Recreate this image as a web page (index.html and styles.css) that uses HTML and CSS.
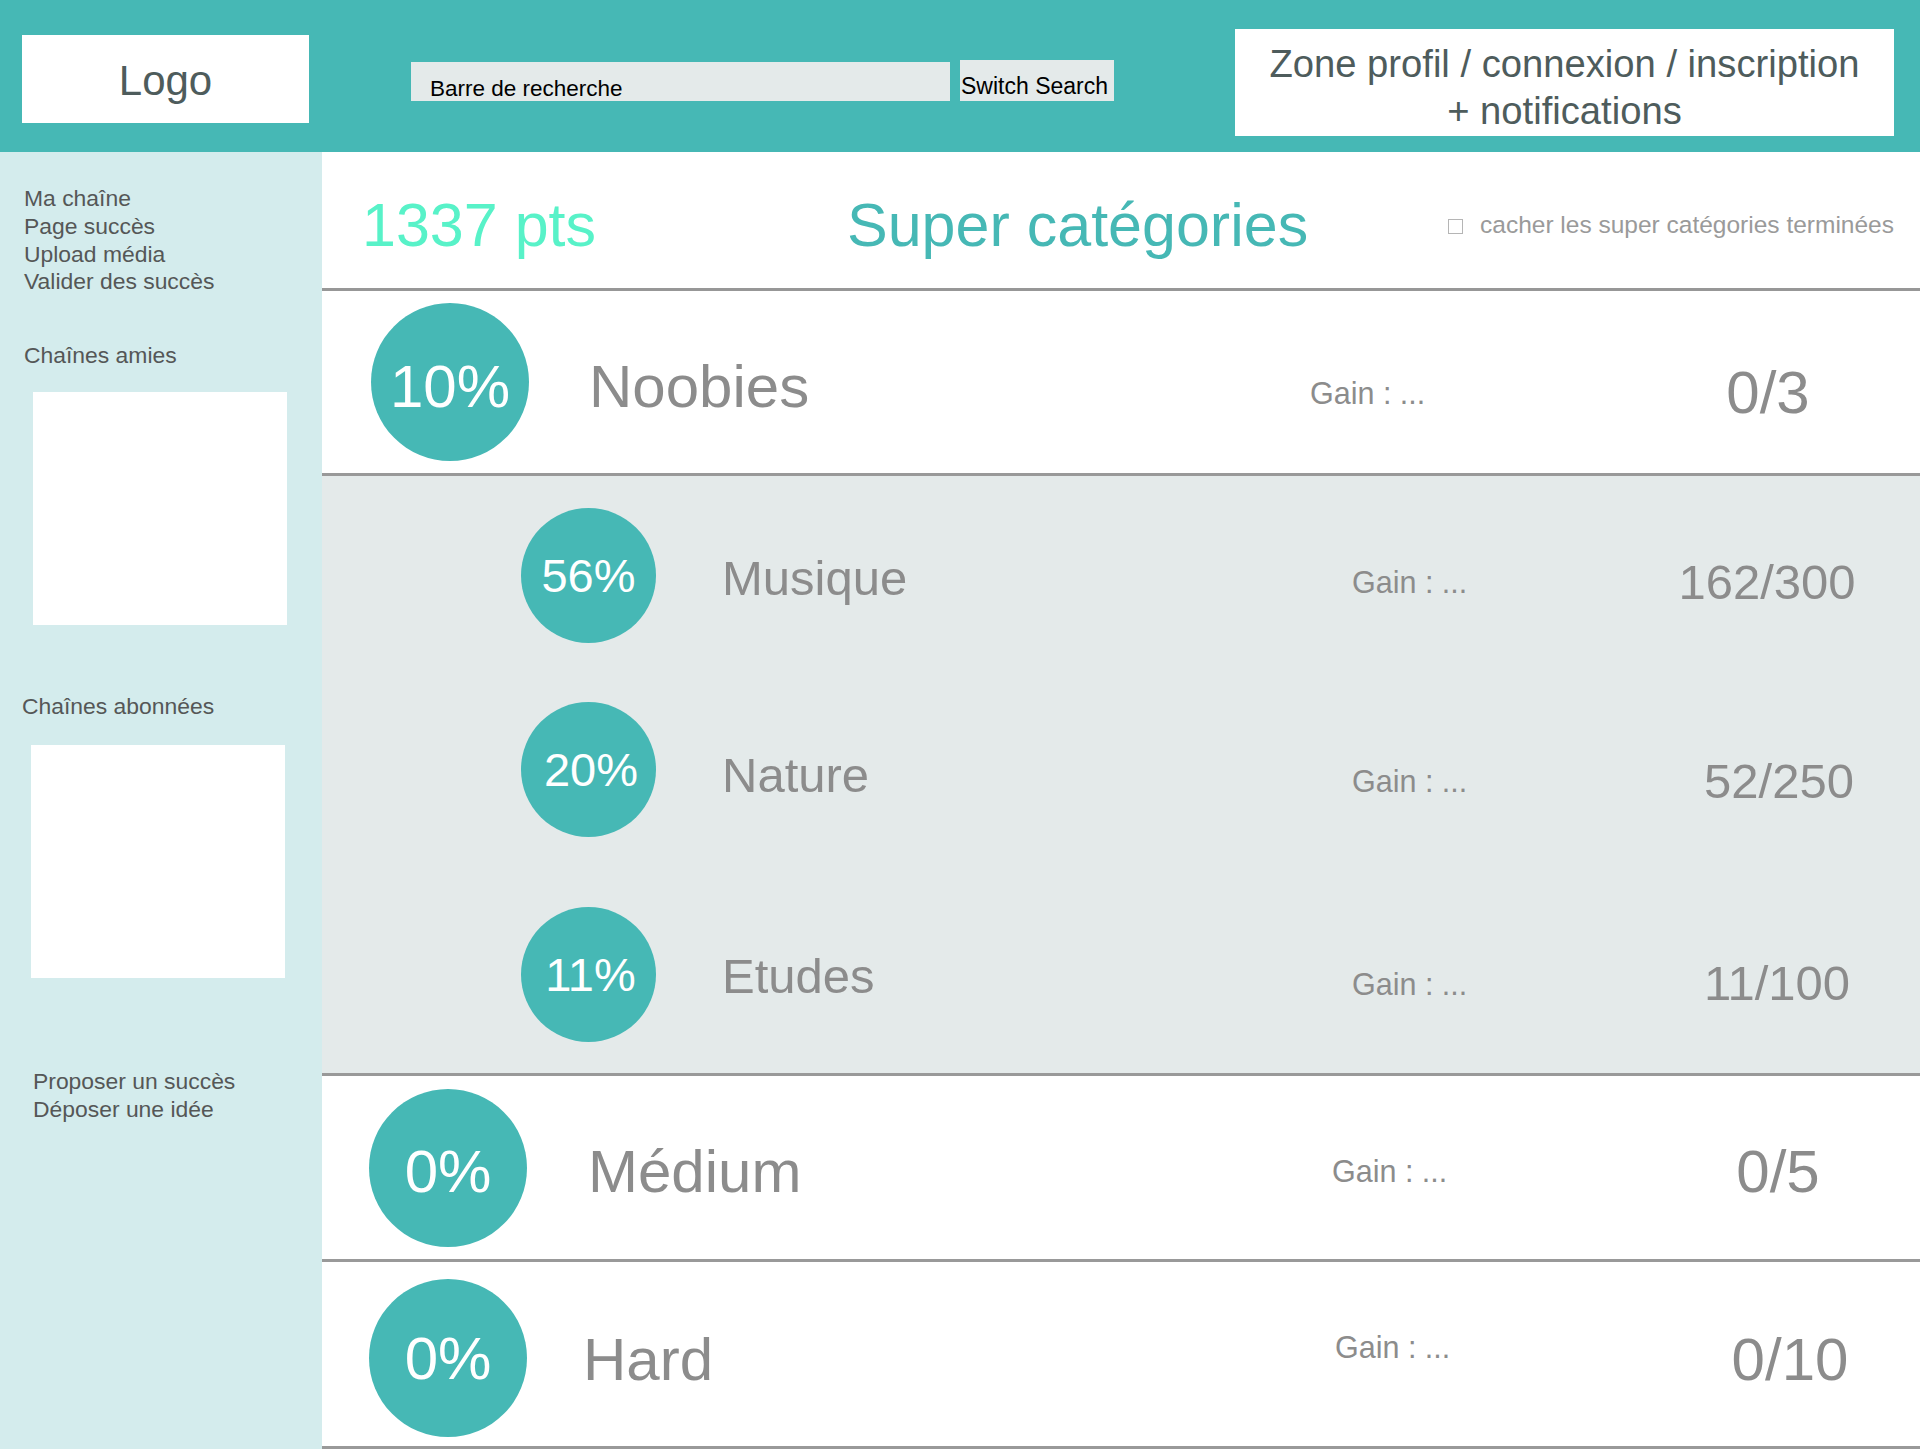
FILE: index.html
```html
<!DOCTYPE html>
<html lang="fr">
<head>
<meta charset="utf-8">
<title>Super catégories</title>
<link rel="stylesheet" href="styles.css">
</head>
<body>
<div class="page">
  <header class="topbar">
    <div class="logo">Logo</div>
    <div class="search">Barre de recherche</div>
    <div class="switch">Switch Search</div>
    <div class="profile">Zone profil / connexion / inscription<br>+ notifications</div>
  </header>
  <div class="layout">
    <aside class="sidebar">
      <ul class="nav">
        <li>Ma chaîne</li>
        <li>Page succès</li>
        <li>Upload média</li>
        <li>Valider des succès</li>
      </ul>
      <div class="side-label side-label--friends">Chaînes amies</div>
      <div class="side-box side-box--friends"></div>
      <div class="side-label side-label--subs">Chaînes abonnées</div>
      <div class="side-box side-box--subs"></div>
      <ul class="nav nav--bottom">
        <li>Proposer un succès</li>
        <li>Déposer une idée</li>
      </ul>
    </aside>
    <main class="content">
      <div class="content-head">
        <div class="points">1337 pts</div>
        <h1 class="title">Super catégories</h1>
        <label class="hide-done"><span class="checkbox"></span>cacher les super catégories terminées</label>
      </div>
      <section class="row row--big row--noobies">
        <div class="circle">10%</div>
        <div class="name">Noobies</div>
        <div class="gain">Gain : ...</div>
        <div class="count">0/3</div>
      </section>
      <div class="subs">
        <div class="row row--sub row--musique">
          <div class="circle">56%</div>
          <div class="name">Musique</div>
          <div class="gain">Gain : ...</div>
          <div class="count">162/300</div>
        </div>
        <div class="row row--sub row--nature">
          <div class="circle">20%</div>
          <div class="name">Nature</div>
          <div class="gain">Gain : ...</div>
          <div class="count">52/250</div>
        </div>
        <div class="row row--sub row--etudes">
          <div class="circle">11%</div>
          <div class="name">Etudes</div>
          <div class="gain">Gain : ...</div>
          <div class="count">11/100</div>
        </div>
      </div>
      <section class="row row--big row--medium">
        <div class="circle">0%</div>
        <div class="name">Médium</div>
        <div class="gain">Gain : ...</div>
        <div class="count">0/5</div>
      </section>
      <section class="row row--big row--hard">
        <div class="circle">0%</div>
        <div class="name">Hard</div>
        <div class="gain">Gain : ...</div>
        <div class="count">0/10</div>
      </section>
    </main>
  </div>
</div>
</body>
</html>
```
FILE: styles.css
```css
* { box-sizing: border-box; }
html, body {
  margin: 0;
  padding: 0;
  width: 1920px;
  height: 1449px;
  overflow: hidden;
  background: #ffffff;
  font-family: "Liberation Sans", Arial, Helvetica, sans-serif;
}
.page { width: 1920px; height: 1449px; display: flex; flex-direction: column; }

/* ---------- top bar ---------- */
.topbar {
  flex: none;
  height: 152px;
  background: #46b8b5;
  display: flex;
  align-items: flex-start;
  padding-left: 22px;
}
.logo {
  width: 287px;
  height: 88px;
  margin-top: 35px;
  background: #fff;
  color: #4e5c5c;
  font-size: 42px;
  display: flex;
  align-items: center;
  justify-content: center;
  padding-top: 3px;
}
.search {
  width: 539px;
  height: 39px;
  margin-top: 62px;
  margin-left: 102px;
  background: #e4eaea;
  color: #000;
  font-size: 22.5px;
  line-height: 26px;
  padding: 14px 0 0 19px;
  white-space: nowrap;
}
.switch {
  width: 154px;
  height: 41px;
  margin-top: 60px;
  margin-left: 10px;
  background: #e4eaea;
  color: #000;
  font-size: 23px;
  line-height: 26px;
  padding: 13px 0 0 1px;
  white-space: nowrap;
}
.profile {
  width: 659px;
  height: 107px;
  margin-top: 29px;
  margin-left: 121px;
  background: #fff;
  color: #4e5c5c;
  font-size: 38.2px;
  line-height: 47px;
  text-align: center;
  padding-top: 11px;
  white-space: nowrap;
}

/* ---------- layout ---------- */
.layout { flex: 1; display: flex; }
.sidebar {
  flex: none;
  width: 322px;
  background: #d4eced;
  color: #555757;
  font-size: 22.9px;
  line-height: 27.8px;
  padding-top: 33px;
}
.nav { list-style: none; margin: 0; padding: 0 0 0 24px; }
.nav--bottom { margin-top: 90px; padding-left: 33px; }
.side-label { white-space: nowrap; }
.side-label--friends { margin-top: 46px; padding-left: 24px; }
.side-label--subs { margin-top: 68px; padding-left: 22px; }
.side-box { width: 254px; height: 233px; background: #fff; }
.side-box--friends { margin-top: 22px; margin-left: 33px; }
.side-box--subs { margin-top: 24px; margin-left: 31px; }

/* ---------- content ---------- */
.content { flex: 1; display: flex; flex-direction: column; }
.content-head {
  flex: none;
  height: 139px;
  border-bottom: 3px solid #979797;
  display: flex;
  align-items: flex-start;
  padding-left: 40px;
}
.points {
  width: 485px;
  margin-top: 38px;
  font-size: 61px;
  line-height: 70px;
  color: #58f2c8;
  white-space: nowrap;
}
.title {
  width: 601px;
  margin: 38px 0 0 0;
  font-size: 61px;
  line-height: 70px;
  font-weight: normal;
  color: #46b8b5;
  white-space: nowrap;
}
.hide-done {
  margin-top: 59px;
  display: flex;
  align-items: center;
  font-size: 24.5px;
  line-height: 28px;
  color: #9a9a9a;
  white-space: nowrap;
}
.checkbox {
  width: 15px;
  height: 15px;
  border: 1px solid #b5b5b5;
  background: #fff;
  margin: 3px 17px 0 0;
}

/* ---------- rows ---------- */
.row {
  display: grid;
  grid-template-columns:
    var(--d)
    calc(var(--gx) - var(--cx) - var(--d))
    calc(var(--kc) - 120px - var(--gx))
    240px;
  align-items: center;
  padding-left: var(--cx);
  color: #8c8c8c;
  white-space: nowrap;
}
.row--big { border-bottom: 3px solid #999; }
.circle {
  width: var(--d);
  height: var(--d);
  border-radius: 50%;
  background: #46b8b5;
  color: #fff;
  display: flex;
  align-items: center;
  justify-content: center;
  padding-top: var(--cs, 0px);
  margin-top: var(--cm, 0px);
}
.name { padding-left: calc(var(--nx) - var(--cx) - var(--d)); margin-top: var(--ns, 0px); }
.gain { font-size: 30.5px; margin-top: var(--gs, 0px); }
.count { text-align: center; margin-top: var(--ks, 0px); }

.row--big .circle { font-size: 60px; }
.row--big .name { font-size: 60px; }
.row--big .count { font-size: 60px; }

.row--noobies { height: 185px; --cx: 49px; --d: 158px; --nx: 267px; --gx: 988px; --kc: 1446px; --cs: 8px; --ns: 9px; --gs: 22px; --ks: 21px; }
.row--medium { height: 186px; --cx: 47px; --d: 158px; --nx: 266px; --gx: 1010px; --kc: 1456px; --cs: 8px; --ns: 8px; --gs: 7px; --ks: 8px; }
.row--hard { height: 187px; --cx: 47px; --d: 158px; --nx: 261px; --gx: 1013px; --kc: 1468px; --cm: 8px; --ns: 11px; --gs: -14px; --ks: 11px; }

.subs {
  flex: none;
  height: 600px;
  background: #e4eaea;
  border-bottom: 3px solid #999;
}
.row--sub { height: 199px; --cx: 199px; --d: 135px; --nx: 400px; --gx: 1030px; --kc: 1445px; --ns: 4px; --gs: 14px; --ks: 12px; }
.row--sub .circle { font-size: 47px; }
.row--sub .name { font-size: 49px; }
.row--sub .count { font-size: 49px; }
.row--nature { --cm: -10px; --cs: 0px; --ns: 0px; --gs: 14px; --ks: 12px; --kc: 1457px; }
.row--nature .circle { padding-left: 5px; }
.row--etudes { --cm: 2px; --ns: 4px; --gs: 22px; --ks: 18px; --kc: 1455px; }
.row--etudes .circle { padding-left: 4px; }
```
